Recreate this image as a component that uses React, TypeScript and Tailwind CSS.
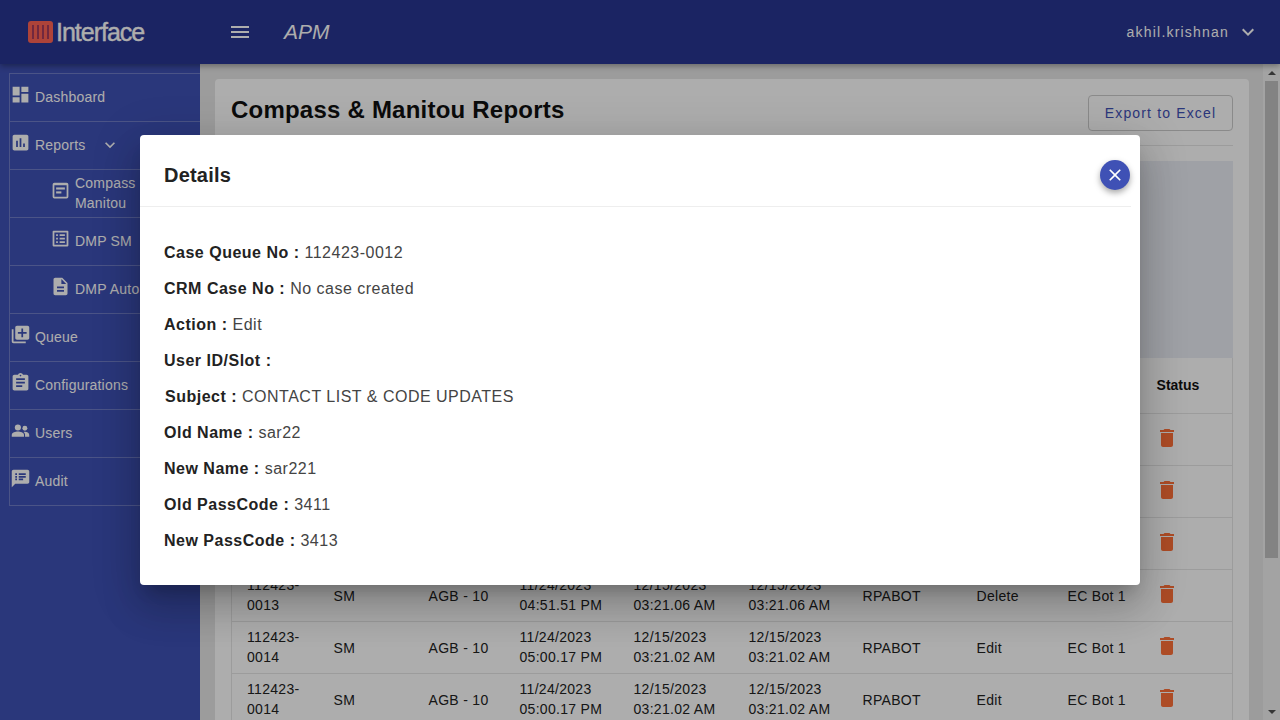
import React from "react";
import {
  MdDashboard, MdAssessment, MdOutlineListAlt, MdDescription, MdQueue,
  MdAssignment, MdSpeakerNotes, MdExpandMore, MdMenu, MdClose, MdDelete,
} from "react-icons/md";

function CompassIcon({ size, className }: { size?: number; className?: string }) {
  return (
    <svg width={size} height={size} viewBox="0 0 24 24" fill="currentColor" className={className}>
      <path fillRule="evenodd" d="M5 3h14a2 2 0 0 1 2 2v14a2 2 0 0 1-2 2H5a2 2 0 0 1-2-2V5a2 2 0 0 1 2-2zm0 3v13h14V6z" />
      <rect x="7" y="8.5" width="10" height="2.4" />
      <rect x="7" y="13" width="6" height="2.4" />
    </svg>
  );
}

function UsersIcon({ size, className }: { size?: number; className?: string }) {
  return (
    <svg width={size} height={size} viewBox="0 0 24 24" fill="currentColor" className={className}>
      <circle cx="9" cy="8.5" r="3.5" />
      <circle cx="17" cy="9.5" r="2.8" />
      <path d="M2 19v-2c0-2.6 4.4-3.8 7-3.8s7 1.2 7 3.8v2z" />
      <path d="M17.2 19v-2c0-1.5-.7-2.6-1.8-3.4.6-.2 1.3-.3 1.8-.3 2 0 4.8 1.1 4.8 3.7v2z" />
    </svg>
  );
}

const nav = [
  { icon: MdDashboard, label: "Dashboard" },
  { icon: MdAssessment, label: "Reports", chevron: true },
  { icon: CompassIcon, label: "Compass Manitou", sub: true, wrap: true },
  { icon: MdOutlineListAlt, label: "DMP SM", sub: true },
  { icon: MdDescription, label: "DMP Auto", sub: true },
  { icon: MdQueue, label: "Queue" },
  { icon: MdAssignment, label: "Configurations" },
  { icon: UsersIcon, label: "Users" },
  { icon: MdSpeakerNotes, label: "Audit" },
];

const rows = [
  {},
  {},
  {},
  { id: "0013", t: "04:51.51 PM", u: "03:21.06 AM", a: "Delete" },
  { id: "0014", t: "05:00.17 PM", u: "03:21.02 AM", a: "Edit" },
  { id: "0014", t: "05:00.17 PM", u: "03:21.02 AM", a: "Edit" },
] as { id?: string; t?: string; u?: string; a?: string }[];

const details = [
  ["Case Queue No :", "112423-0012"],
  ["CRM Case No :", "No case created"],
  ["Action :", "Edit"],
  ["User ID/Slot :", ""],
  ["Subject :", "CONTACT LIST & CODE UPDATES"],
  ["Old Name :", "sar22"],
  ["New Name :", "sar221"],
  ["Old PassCode :", "3411"],
  ["New PassCode :", "3413"],
];

const cols = [87, 95, 91, 114, 115, 114, 114, 91, 89, 91];

function Stack({ a, b }: { a?: string; b?: string }) {
  return (
    <div>
      <div>{a}</div>
      <div>{b}</div>
    </div>
  );
}

export default function App() {
  return (
    <div className="relative flex h-screen w-[1280px] flex-col overflow-hidden bg-[#e6e6e6] font-['Liberation_Sans',Arial,sans-serif]">
      <header className="z-10 flex h-16 shrink-0 items-center bg-[#283593] text-white shadow-[0_2px_6px_rgba(0,0,0,0.35)]">
        <div className="flex w-[228px] items-center pl-7">
          <svg width="25" height="22" viewBox="0 0 25 22" className="shrink-0">
            <rect width="25" height="22" rx="3" fill="#ff6454" />
            <rect x="4" y="4" width="2" height="14" fill="#a83c5c" />
            <rect x="9" y="4" width="2" height="14" fill="#a83c5c" />
            <rect x="14" y="4" width="2" height="14" fill="#a83c5c" />
            <rect x="19" y="4" width="2" height="14" fill="#a83c5c" />
          </svg>
          <span className="ml-[3px] text-[25px] leading-none tracking-[-1px] text-white [-webkit-text-stroke:0.4px_white]">Interface</span>
        </div>
        <MdMenu size={24} />
        <span className="ml-8 text-[21px] italic">APM</span>
        <div className="ml-auto flex items-center pr-[20px]">
          <span className="text-sm font-medium tracking-[1.2px]">akhil.krishnan</span>
          <MdExpandMore size={24} className="ml-[7px]" />
        </div>
      </header>

      <div className="flex min-h-0 flex-1">
        <aside className="w-[200px] shrink-0 bg-[#3f51b5] pl-[9px] pt-[9px] text-sm tracking-[0.2px] text-white">
          <ul className="border-l border-t border-white/25">
            {nav.map((n) => (
              <li key={n.label} className={`flex h-12 items-center border-b border-white/25 pb-0.5 ${n.sub ? "pl-[40px]" : ""}`}>
                <n.icon size={21} className="-mt-1 shrink-0" />
                <span className={n.wrap ? "ml-[4px] w-[64px] leading-5" : "ml-[4px] whitespace-nowrap"}>{n.label}</span>
                {n.chevron && <MdExpandMore size={20} className="ml-[15px]" />}
              </li>
            ))}
          </ul>
        </aside>

        <main className="min-w-0 flex-1 overflow-hidden pl-[15px] pr-[14px] pt-[15px]">
          <section className="rounded bg-white px-4">
            <div className="flex h-[67px] items-start justify-between border-b border-[#e6e6e6] pt-4">
              <h1 className="text-2xl font-bold leading-[30px] tracking-[0.22px] text-[#111]">Compass &amp; Manitou Reports</h1>
              <button className="h-9 w-[145px] rounded border border-[#ccc] text-sm tracking-[1.15px] text-[#3f51b5]">Export to Excel</button>
            </div>
            <div className="mt-[15px] ml-px h-[197px] bg-[#ebeef5]" />
            <table className="w-[1001px] table-fixed border-collapse text-sm tracking-[0.3px] text-[#222]">
              <colgroup>
                {cols.map((c, i) => <col key={i} style={{ width: c }} />)}
              </colgroup>
              <thead>
                <tr className="h-[55px] border-x border-b border-[#e6e6e6]">
                  <th colSpan={9} />
                  <th className="pl-[15px] text-left text-[14px] font-bold tracking-normal text-[#111]">Status</th>
                </tr>
              </thead>
              <tbody>
                {rows.map((r, i) => (
                  <tr key={i} className="h-[52px] border-x border-b border-[#e6e6e6] leading-5">
                    <td className="pl-[15px]">{r.id && <Stack a="112423-" b={r.id} />}</td>
                    <td className="pl-[15px] pt-0.5">{r.id && "SM"}</td>
                    <td className="pl-[15px] pt-0.5">{r.id && "AGB - 10"}</td>
                    <td className="pl-[15px]">{r.id && <Stack a="11/24/2023" b={r.t} />}</td>
                    <td className="pl-[15px]">{r.id && <Stack a="12/15/2023" b={r.u} />}</td>
                    <td className="pl-[15px]">{r.id && <Stack a="12/15/2023" b={r.u} />}</td>
                    <td className="pl-[15px] pt-0.5">{r.id && "RPABOT"}</td>
                    <td className="pl-[15px] pt-0.5">{r.a}</td>
                    <td className="pl-[15px] pt-0.5">{r.id && "EC Bot 1"}</td>
                    <td className="pl-[13px]"><MdDelete size={24} className="-mt-[2px] text-[#ff7038]" /></td>
                  </tr>
                ))}
              </tbody>
            </table>
          </section>
        </main>

        <div className="flex w-[17px] shrink-0 flex-col items-center bg-[#f1f1f1]">
          <div className="flex h-[17px] w-full items-center justify-center">
            <div className="h-0 w-0 border-x-[4px] border-b-[4px] border-x-transparent border-b-[#505050]" />
          </div>
          <div className="ml-[2px] h-[477px] w-[13px] self-start bg-[#c1c1c1]" />
          <div className="mt-auto flex h-[17px] w-full items-center justify-center">
            <div className="h-0 w-0 border-x-[4px] border-t-[4px] border-x-transparent border-t-[#505050]" />
          </div>
        </div>
      </div>

      <div className="absolute inset-0 z-20 bg-black/[0.32]" />

      <div className="absolute left-[140px] top-[135px] z-30 h-[450px] w-[1000px] rounded bg-white shadow-[0_11px_15px_-7px_rgba(0,0,0,0.2),0_24px_38px_3px_rgba(0,0,0,0.14),0_9px_46px_8px_rgba(0,0,0,0.12)]">
        <div className="mr-[9px] flex h-[72px] items-center border-b border-[#eeeeee] pl-6 pt-2">
          <h2 className="text-[20px] font-bold tracking-[0.2px] text-[#222]">Details</h2>
        </div>
        <button className="absolute left-[960px] top-[25px] flex h-[30px] w-[30px] items-center justify-center rounded-full bg-[#3f51b5] text-white shadow-[0_3px_6px_rgba(0,0,0,0.35)]">
          <MdClose size={20} />
        </button>
        <div className="pl-6 pt-[28px] text-base tracking-[0.5px] text-[#444]">
          {details.map(([k, v]) => (
            <p key={k} className={`h-9 leading-9 ${k === "Subject :" ? "pl-px" : ""}`}>
              <b className="font-bold text-[#222]">{k}</b> {v}
            </p>
          ))}
        </div>
      </div>
    </div>
  );
}
